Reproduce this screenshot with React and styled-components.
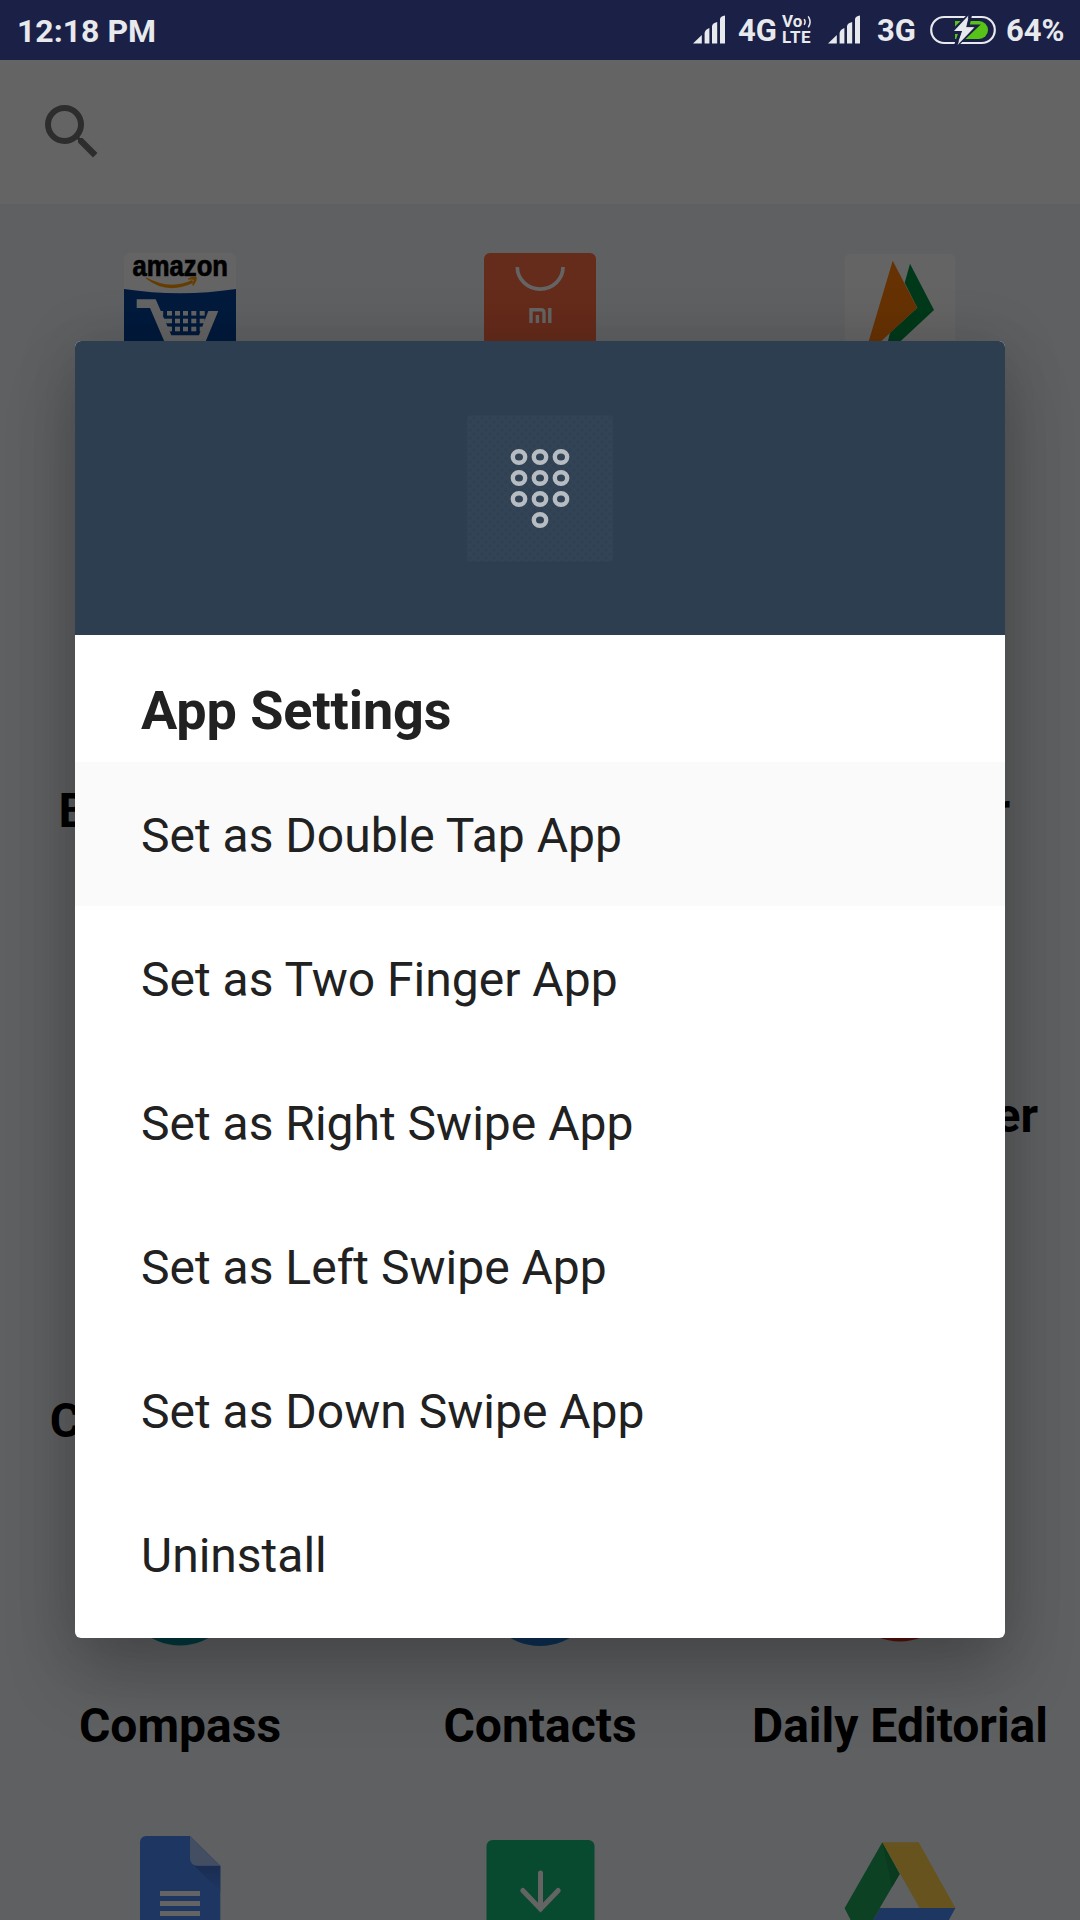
import React from "react";
import styled, { createGlobalStyle } from "styled-components";

const GlobalStyle = createGlobalStyle`
  * { box-sizing: border-box; }
  html, body { margin: 0; padding: 0; }
  body { overflow: hidden; font-family: Roboto, "Noto Sans", sans-serif; }
  svg { display: block; flex: none; overflow: visible; }
`;

const Screen = styled.div`
  width: 1080px;
  height: 1920px;
  display: flex;
  flex-direction: column;
  overflow: hidden;
`;

const StatusBar = styled.header`
  flex: none;
  height: 60px;
  padding: 0 19px 0 17px;
  display: flex;
  align-items: center;
  justify-content: space-between;
  background: #1a2046;
  color: #e8e9ed;
`;

const StatusText = styled.span`
  flex: none;
  width: ${(p) => p.$w || "auto"};
  font-size: ${(p) => p.$size || 32}px;
  line-height: 38px;
  font-weight: 700;
  white-space: nowrap;
  padding-top: 2px;
`;

const StatusGroup = styled.div`
  display: flex;
  align-items: center;
`;

const Spacer = styled.span`
  flex: none;
  width: ${(p) => p.$w}px;
`;

const VolteBadge = styled.div`
  width: 32px;
  height: 30px;
  display: flex;
  flex-direction: column;
  font-weight: 700;
`;

const VolteTop = styled.div`
  height: 14px;
  display: flex;
  font-size: 17px;
  line-height: 13px;
`;

const VolteBottom = styled.div`
  height: 16px;
  font-size: 17px;
  line-height: 17px;
  letter-spacing: 0.6px;
`;

const Desktop = styled.main`
  position: relative;
  flex: 1;
  min-height: 0;
  display: flex;
  flex-direction: column;
  overflow: hidden;
  background: #eef0f4;
`;

const SearchBar = styled.div`
  flex: none;
  height: 144px;
  padding: 0 36px;
  display: flex;
  align-items: center;
  background: #fafafa;
`;

const AppGrid = styled.div`
  flex: none;
  padding-top: 45px;
  display: grid;
  grid-template-columns: repeat(3, 360px);
  grid-template-rows: 363px repeat(5, 305px);
`;

const AppCell = styled.div`
  display: flex;
  flex-direction: column;
  align-items: center;
  gap: 51px;
`;

const AppLabel = styled.span`
  font-size: 48px;
  line-height: 56px;
  font-weight: 700;
  letter-spacing: ${(p) => p.$track || 0}px;
  color: #000;
  white-space: nowrap;
`;

const Scrim = styled.div`
  position: absolute;
  inset: 0;
  padding-top: 281px;
  display: flex;
  align-items: flex-start;
  justify-content: center;
  background: rgba(0, 0, 0, 0.6);
`;

const Dialog = styled.section`
  width: 930px;
  height: 1297px;
  display: flex;
  flex-direction: column;
  border-radius: 6px;
  overflow: hidden;
  background: #fff;
  box-shadow: 0 40px 72px rgba(0, 0, 0, 0.2), 0 4px 60px rgba(0, 0, 0, 0.15);
`;

const DialogHeader = styled.div`
  flex: none;
  height: 294px;
  display: flex;
  align-items: center;
  justify-content: center;
  background: #2d3e50;
`;

const DialogTitle = styled.h1`
  flex: none;
  margin: 0;
  height: 127px;
  padding: 44px 66px 0;
  font-size: 54px;
  line-height: 64px;
  font-weight: 700;
  letter-spacing: -0.1px;
  color: #212121;
`;

const Option = styled.div`
  flex: none;
  height: 144px;
  padding: 2px 66px 0;
  display: flex;
  align-items: center;
  font-size: 48px;
  color: #212121;
  background: ${(p) => (p.$active ? "#fafafa" : "#fff")};
`;

const Signal = () => (
  <svg width="33" height="30" viewBox="0 0 33 30" fill="#e8e9ed">
    <path d="M0 28.5L8.8 20V28.5Z" />
    <path d="M11.6 28.5V18Q12 14.5 16.4 13V28.5Z" />
    <path d="M19 28.5V11Q19.5 8 24.2 7V28.5Z" />
    <path d="M27 28.5V4Q27.4 1 32 0.4V28.5Z" />
  </svg>
);

const Battery = () => (
  <svg width="66" height="32" viewBox="0 0 66 32">
    <rect x="1.2" y="3" width="63.6" height="26" rx="13" fill="none" stroke="#e8e9ed" strokeWidth="2.2" />
    <path d="M25 7H49a9 9 0 0 1 0 18H25Z" fill="#57c318" />
    <path d="M41 -1L21 18.5H30L25 33L47 12H38Z" fill="#e8e9ed" stroke="#1a2046" strokeWidth="3" />
    <path d="M38.4 1.5L24 17H32.6L27.6 31L44.5 13.2H35.7Z" fill="#e8e9ed" />
  </svg>
);

const VoiceWaves = () => (
  <svg width="9" height="14" viewBox="0 0 9 14" fill="none" stroke="#e8e9ed" strokeWidth="1.5">
    <path d="M2.2 4.2Q4 7 2.2 9.8" />
    <path d="M6.2 1.4Q10 7 6.2 12.4" />
  </svg>
);

const SearchIcon = () => (
  <svg width="72" height="72" viewBox="0 0 24 24" fill="#727272">
    <path d="M15.5 14h-.79l-.28-.27A6.471 6.471 0 0 0 16 9.5 6.5 6.5 0 1 0 9.5 16c1.61 0 3.09-.59 4.23-1.57l.27.28v.79l5 4.99L20.49 19l-4.99-5zm-6 0C7.01 14 5 11.99 5 9.5S7.01 5 9.5 5 14 7.01 14 9.5 11.99 14 9.5 14z" />
  </svg>
);

const IconFrame = ({ children, inset }) => (
  <svg width="120" height="120" viewBox={inset ? "-4 -4 120 120" : "0 0 120 120"}>
    {children}
  </svg>
);

const ShopIcon = () => (
  <IconFrame inset>
    <rect width="112" height="112" rx="6" fill="#fafafa" />
    <path d="M0 36Q56 44.5 112 36V106a6 6 0 0 1-6 6H6a6 6 0 0 1-6-6Z" fill="#054397" />
    <text
      x="8.5"
      y="22.5"
      fontFamily="Liberation Sans, sans-serif"
      fontWeight="700"
      fontSize="29.5"
      stroke="#000"
      strokeWidth="0.7"
      textLength="95.5"
      lengthAdjust="spacingAndGlyphs"
    >
      amazon
    </text>
    <path d="M22 24.3Q46 37.5 68 27L69.5 29.8Q43 42.5 22 25.5Z" fill="#ff9900" />
    <path d="M64 25.5Q70 22.3 73 24Q73 28.5 69.5 32.8L68 32Q70 28 69.4 26.8Q68 26 64.3 26.8Z" fill="#ff9900" />
    <g fill="#fafafa">
      <path d="M12.7 46.3H31.7L47.3 82.3H75L84.3 58H94.3L81 90H41L26 55H12.7Z" />
      {[58, 65.7, 73.7].map((y, r) =>
        [34.7 + r * 3.7, 43, 51, 59, 67.3, 75.7].map((x, c) => (
          <rect key={`${r}-${c}`} x={x} y={y} width={c === 0 ? 4.5 : 5} height="4.6" />
        ))
      )}
    </g>
  </IconFrame>
);

const StoreIcon = () => (
  <IconFrame inset>
    <rect width="112" height="112" rx="6" fill="#fd6b44" />
    <g fill="none" stroke="#fafafa" strokeWidth="3.7">
      <path d="M33.3 14A22.8 22 0 0 0 79 14" />
      <path strokeWidth="3.4" d="M47 70V56.7H57Q60 56.7 60 59.7V70" />
      <path strokeWidth="3.4" d="M53.4 62V70M65.8 55V70" />
    </g>
  </IconFrame>
);

const PayIcon = () => (
  <IconFrame inset>
    <rect x="0.8" y="0.8" width="110.4" height="110.4" rx="6" fill="#fafafa" />
    <path d="M66 10.7L90 57L57 87.7L40 104L46 79.7L73.3 54.7L60.7 29.7Z" fill="#008f41" />
    <path d="M48.7 7.7L73.3 54.7L37.7 87.7L20 104Z" fill="#ff7d0c" />
  </IconFrame>
);

const DiscIcon = ({ fill, r, cy }) => (
  <IconFrame>
    <circle cx="60" cy={cy} r={r} fill={fill} />
  </IconFrame>
);

const DocsIcon = () => (
  <IconFrame>
    <defs>
      <linearGradient id="foldShade" x1="0" y1="0" x2="0" y2="1">
        <stop offset="0" stopColor="#416fca" />
        <stop offset="1" stopColor="#4d8af5" />
      </linearGradient>
    </defs>
    <path d="M26 4H70L100.3 33.7V120H20V10a6 6 0 0 1 6-6Z" fill="#4d8af5" />
    <path d="M73 32.5L100.3 60V33.7H76Z" fill="url(#foldShade)" />
    <path d="M70 4L100.3 33.7H77a7 7 0 0 1-7-7Z" fill="#a8c2f8" />
    <path d="M40 59h40v5H40ZM40 69h40v5H40ZM40 79h40v5H40Z" fill="#fafafa" />
  </IconFrame>
);

const DownloadIcon = () => (
  <IconFrame>
    <rect x="6.5" y="8" width="108" height="108" rx="6" fill="#14b976" />
    <path d="M60.5 41V77M42.8 58.5L60.5 77L78.2 58.5" fill="none" stroke="#fafafa" strokeWidth="5" strokeLinecap="round" />
  </IconFrame>
);

const DriveIcon = () => (
  <IconFrame>
    <path d="M42.3 10.3L59.7 42L21 108L4.7 76Z" fill="#1fa457" />
    <path d="M42.3 10.3L59.7 42L52 55Z" fill="#1b944e" />
    <path d="M42.3 10.3H78.7L115.4 76H79.5Z" fill="#ffd04b" />
    <path d="M40.3 76H115.4L98 108H21Z" fill="#4a87f5" />
    <path d="M40.3 76L21 108L4.7 76Z" fill="#1fa457" />
  </IconFrame>
);

const KeypadIcon = () => (
  <svg width="148" height="148" viewBox="0 0 148 148">
    <defs>
      <pattern id="weave" width="8" height="8" patternUnits="userSpaceOnUse">
        <rect width="8" height="8" fill="#2f4153" />
        <path d="M0 0L8 8M8 0L0 8" stroke="#324455" strokeWidth="1.5" />
      </pattern>
    </defs>
    <rect x="1" y="1.5" width="146" height="146" rx="3" fill="url(#weave)" />
    <g fill="none" stroke="#b6bcc2" strokeWidth="4.4">
      {[43, 64, 85].map((y) => [53, 74, 95].map((x) => <ellipse key={`${x}-${y}`} cx={x} cy={y} rx="6.2" ry="5.8" />))}
      <ellipse cx="74" cy="106" rx="6.2" ry="5.8" />
    </g>
  </svg>
);

const apps = [
  { icon: <ShopIcon /> },
  { icon: <StoreIcon /> },
  { icon: <PayIcon /> },
  { label: "Bluetooth+", track: 0.8 },
  {},
  { label: "Calculator" },
  {},
  {},
  { label: "CamScanner" },
  { label: "Cell Tracker", track: 0.25 },
  {},
  {},
  { label: "Compass", icon: <DiscIcon fill="#00919d" r={58.5} cy={60} /> },
  { label: "Contacts", icon: <DiscIcon fill="#217bd7" r={59} cy={60} /> },
  { label: "Daily Editorial", icon: <DiscIcon fill="#dd2c20" r={58} cy={56.5} /> },
  { icon: <DocsIcon /> },
  { icon: <DownloadIcon /> },
  { icon: <DriveIcon /> },
];

const options = [
  "Set as Double Tap App",
  "Set as Two Finger App",
  "Set as Right Swipe App",
  "Set as Left Swipe App",
  "Set as Down Swipe App",
  "Uninstall",
];

export default function App() {
  return (
    <>
      <GlobalStyle />
      <Screen>
        <StatusBar>
          <StatusText>12:18 PM</StatusText>
          <StatusGroup>
            <Signal />
            <Spacer $w={12} />
            <StatusText $w="36px" $size={31}>4G</StatusText>
            <Spacer $w={8} />
            <VolteBadge>
              <VolteTop>
                Vo
                <VoiceWaves />
              </VolteTop>
              <VolteBottom>LTE</VolteBottom>
            </VolteBadge>
            <Spacer $w={14} />
            <Signal />
            <Spacer $w={16} />
            <StatusText $w="37px" $size={31}>3G</StatusText>
            <Spacer $w={16} />
            <Battery />
            <Spacer $w={10} />
            <StatusText $w="55px" $size={31}>64%</StatusText>
          </StatusGroup>
        </StatusBar>
        <Desktop>
          <SearchBar>
            <SearchIcon />
          </SearchBar>
          <AppGrid>
            {apps.map((app, i) => (
              <AppCell key={i}>
                {app.icon || <IconFrame />}
                {app.label && <AppLabel $track={app.track}>{app.label}</AppLabel>}
              </AppCell>
            ))}
          </AppGrid>
          <Scrim>
            <Dialog>
              <DialogHeader>
                <KeypadIcon />
              </DialogHeader>
              <DialogTitle>App Settings</DialogTitle>
              {options.map((text, i) => (
                <Option key={text} $active={i === 0}>
                  {text}
                </Option>
              ))}
            </Dialog>
          </Scrim>
        </Desktop>
      </Screen>
    </>
  );
}
